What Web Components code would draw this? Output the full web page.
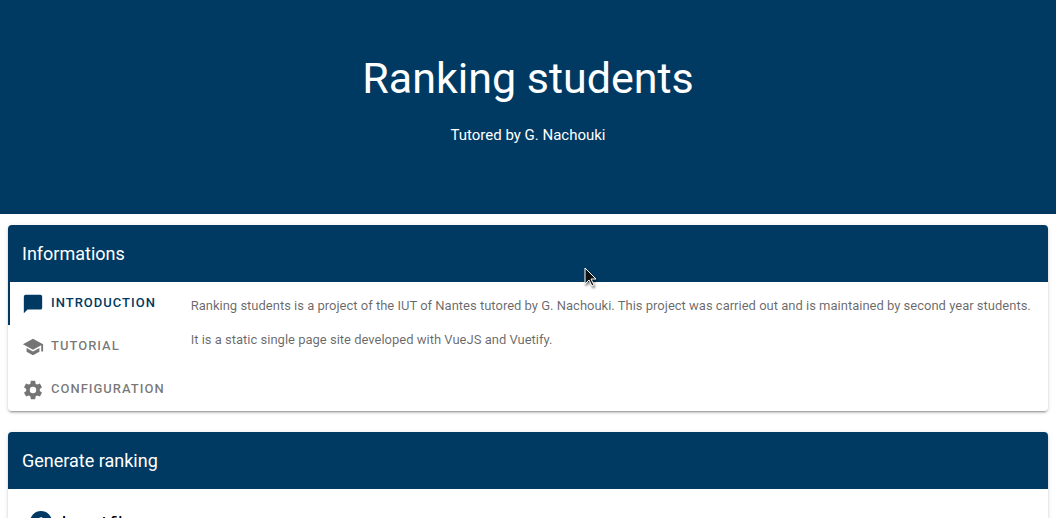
<!DOCTYPE html>
<html lang="en">
<head>
<meta charset="utf-8">
<title>Ranking students</title>
<style>
body { margin: 0; background: #fff; font-family: Roboto, "Liberation Sans", sans-serif; }
</style>
</head>
<body>
<ranking-app></ranking-app>

<template id="app-tpl">
<style>
:host { display: block; }
main { display: flex; flex-direction: column; gap: 21px; padding: 11px 8px; }
</style>
<page-hero>
  <span slot="title">Ranking students</span>
  <span slot="subtitle">Tutored by G. Nachouki</span>
</page-hero>
<main>
  <content-card>
    <span slot="title">Informations</span>
    <info-tabs>
      <p>Ranking students is a project of the IUT of Nantes tutored by G. Nachouki. This project was carried out and is maintained by second year students.</p>
      <p>It is a static single page site developed with VueJS and Vuetify.</p>
    </info-tabs>
  </content-card>
  <content-card>
    <span slot="title">Generate ranking</span>
    <step-item number="1">Import files</step-item>
  </content-card>
</main>
<mouse-pointer></mouse-pointer>
</template>

<template id="hero-tpl">
<style>
:host { display: block; background: #003a63; color: #fff; text-align: center; padding: 50px 16px 66px; box-shadow: inset 0 -3px 4px -2px rgba(0,0,0,.1); }
h1 { margin: 0; font-size: 43px; line-height: 56px; font-weight: 400; }
p { margin: 16px 0 0; font-size: 15px; line-height: 26px; }
</style>
<h1><slot name="title"></slot></h1>
<p><slot name="subtitle"></slot></p>
</template>

<template id="card-tpl">
<style>
:host { display: block; background: #fff; border-radius: 4px; box-shadow: 0 3px 1px -2px rgba(0,0,0,.2), 0 2px 2px rgba(0,0,0,.14), 0 1px 5px rgba(0,0,0,.12); }
h2 { margin: 0; padding: 14px; background: #003a63; color: #fff; border-radius: 4px 4px 0 0; font-size: 18px; line-height: 29px; font-weight: 400; }
</style>
<h2><slot name="title"></slot></h2>
<slot></slot>
</template>

<template id="tabs-tpl">
<style>
:host { display: flex; }
nav { display: flex; flex-direction: column; flex: none; }
.panel { flex: 1; padding: 14px 12px; color: rgba(0,0,0,.6); font-size: 13px; line-height: 20px; }
::slotted(p) { margin: 0 0 14px; }
</style>
<nav role="tablist" aria-label="Informations">
  <tab-button selected label="Introduction" icon="M20 2H4a2 2 0 0 0-2 2v18l4-4h14a2 2 0 0 0 2-2V4a2 2 0 0 0-2-2z"></tab-button>
  <tab-button label="Tutorial" icon="M12 3L1 9l11 6 9-4.91V17h2V9M5 13.18v4L12 21l7-3.82v-4L12 17l-7-3.82z"></tab-button>
  <tab-button label="Configuration" icon="M12 15.5A3.5 3.5 0 0 1 8.5 12 3.5 3.5 0 0 1 12 8.5a3.5 3.5 0 0 1 3.5 3.5 3.5 3.5 0 0 1-3.5 3.5m7.43-2.53c.04-.32.07-.64.07-.97 0-.33-.03-.66-.07-1l2.11-1.63c.19-.15.24-.42.12-.64l-2-3.46c-.12-.22-.39-.31-.61-.22l-2.49 1c-.52-.39-1.06-.73-1.69-.98l-.37-2.65A.506.506 0 0 0 14 2h-4c-.25 0-.46.18-.5.42l-.37 2.65c-.63.25-1.17.59-1.69.98l-2.49-1c-.22-.09-.49 0-.61.22l-2 3.46c-.13.22-.07.49.12.64L4.57 11c-.04.34-.07.67-.07 1 0 .33.03.65.07.97l-2.11 1.66c-.19.15-.25.42-.12.64l2 3.46c.12.22.39.3.61.22l2.49-1.01c.52.4 1.06.74 1.69.99l.37 2.65c.04.24.25.42.5.42h4c.25 0 .46-.18.5-.42l.37-2.65c.63-.26 1.17-.59 1.69-.99l2.49 1.01c.22.08.49 0 .61-.22l2-3.46c.12-.22.07-.49-.12-.64l-2.11-1.66z"></tab-button>
</nav>
<div class="panel" role="tabpanel"><slot></slot></div>
</template>

<template id="tab-tpl">
<style>
:host { display: block; color: rgba(0,0,0,.54); }
:host([selected]) { color: #003a63; box-shadow: inset 2px 0 #003a63; }
button { display: flex; align-items: center; gap: 7px; width: 100%; height: 43px; padding: 0 14px; border: 0; background: none; color: inherit; font: 500 13px/20px Roboto, sans-serif; letter-spacing: 1px; text-transform: uppercase; cursor: pointer; }
svg { width: 22px; height: 22px; fill: currentColor; flex: none; }
span { padding-bottom: 2px; }
</style>
<button type="button" role="tab"><svg viewBox="0 0 24 24" aria-hidden="true"><path/></svg><span></span></button>
</template>

<template id="step-tpl">
<style>
:host { display: flex; align-items: center; gap: 10px; padding: 22px; color: #000; font-size: 15px; line-height: 22px; text-shadow: 0 0 0 #000; }
b { width: 22px; height: 22px; border-radius: 50%; background: #003a63; color: #fff; text-align: center; text-shadow: none; font-size: 11px; font-weight: 400; }
</style>
<b></b><span><slot></slot></span>
</template>

<template id="pointer-tpl">
<style>
:host { position: absolute; left: 55.3%; top: 267px; pointer-events: none; filter: drop-shadow(1px 2px 1px rgba(0,0,0,.5)); }
svg { display: block; }
</style>
<svg width="14" height="20" viewBox="0 0 14 20" aria-hidden="true"><path d="M1 1V17L5 13L8 19L10 18L7 12H12Z" fill="#111" stroke="#fff" stroke-width="1"/></svg>
</template>

<script>
const define = (name, id, setup) => customElements.define(name, class extends HTMLElement {
  connectedCallback() {
    if (this.shadowRoot) return;
    const root = this.attachShadow({ mode: "open" });
    root.append(document.getElementById(id).content.cloneNode(true));
    if (setup) setup(this, root);
  }
});
define("page-hero", "hero-tpl");
define("content-card", "card-tpl");
define("tab-button", "tab-tpl", (el, root) => {
  root.querySelector("path").setAttribute("d", el.getAttribute("icon"));
  root.querySelector("span").textContent = el.getAttribute("label");
  root.querySelector("button").setAttribute("aria-selected", el.hasAttribute("selected"));
});
define("info-tabs", "tabs-tpl");
define("step-item", "step-tpl", (el, root) => {
  root.querySelector("b").textContent = el.getAttribute("number");
});
define("mouse-pointer", "pointer-tpl");
define("ranking-app", "app-tpl");
</script>
</body>
</html>
